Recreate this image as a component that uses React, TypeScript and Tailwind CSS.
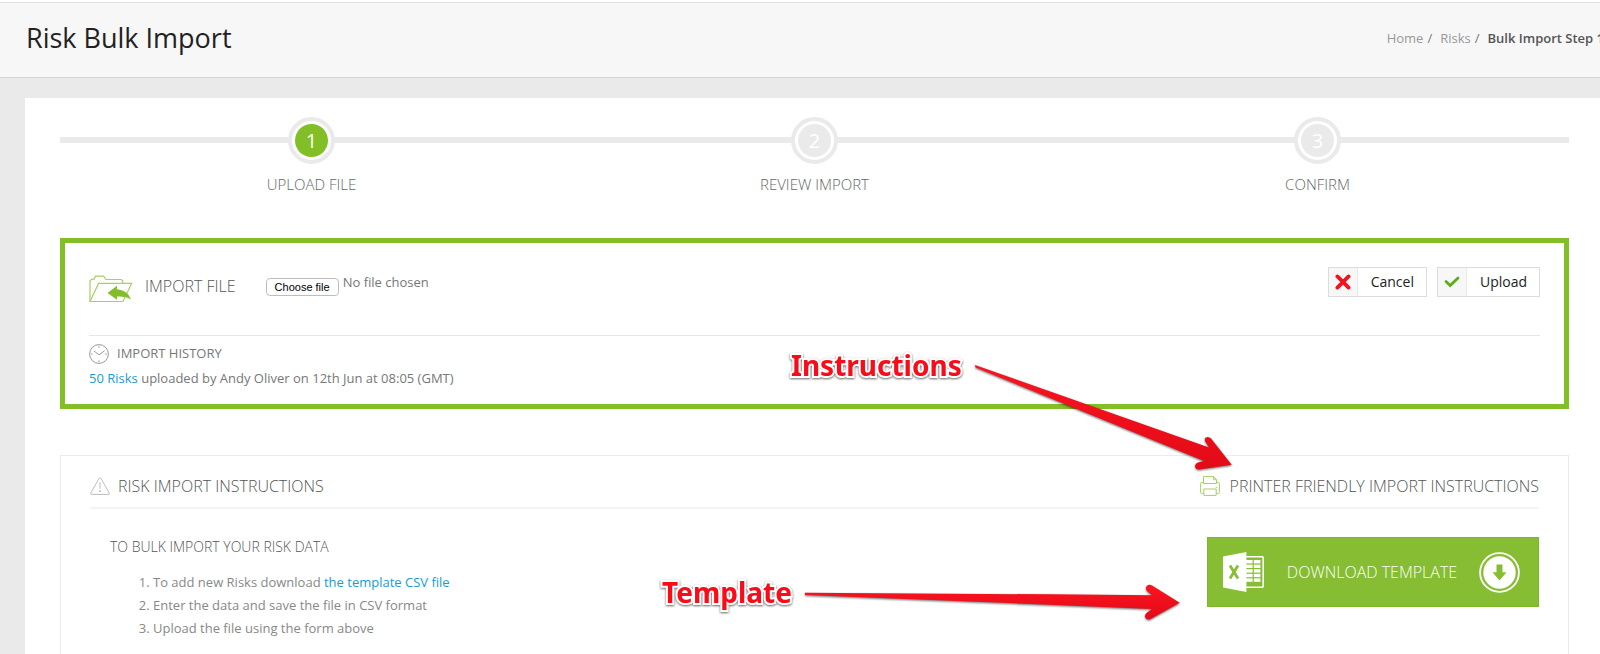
import React, { useState } from 'react';

interface Step {
  id: number;
  label: string;
  active: boolean;
}

const steps: Step[] = [
  { id: 1, label: 'UPLOAD FILE', active: true },
  { id: 2, label: 'REVIEW IMPORT', active: false },
  { id: 3, label: 'CONFIRM', active: false }
];

const FolderIcon = () => (
  <svg width="44" height="28" viewBox="0 0 44 28" fill="none" className="shrink-0">
    <path d="M1 26.5V5.5L3.2 4.2H5.2L6.4 1.2H14.6L17 4.5H32.2L33.8 5.8V8.3" stroke="#a5d160" strokeWidth="1.2" />
    <path d="M1 26.5L9.6 8.4H42.6L34 26.5Z" stroke="#a5d160" strokeWidth="1.2" />
    <path d="M18.5 18L28 10.8V14.2C35 15 39.5 18 42 24.4C38 22 33.5 21.4 28 21.6V24.8Z" fill="#82be2a" />
  </svg>
);

const ClockIcon = () => (
  <svg width="20" height="20" viewBox="0 0 20 20" fill="none" stroke="#8c8c8c" className="shrink-0">
    <circle cx="10" cy="10" r="9.4" strokeWidth="0.9" />
    <path d="M5 7L10 10.8L15.6 6.8" strokeWidth="0.9" />
    <path d="M10 2.2V3.6M10 16.4V17.8M2.2 10H3.6M16.4 10H17.8" strokeWidth="1.2" />
  </svg>
);

const WarningIcon = () => (
  <svg width="20" height="18" viewBox="0 0 20 18" fill="none" stroke="#b5b5b5" className="shrink-0">
    <path d="M9.2 1.2Q10 0 10.8 1.2L19.2 16Q19.6 17.3 18.4 17.4H1.6Q0.4 17.3 0.8 16Z" strokeWidth="0.9" />
    <path d="M10 5.2V11.8" strokeWidth="0.9" />
    <path d="M10 13.6V14.8" stroke="#8c8c8c" strokeWidth="1.4" />
  </svg>
);

const PrinterIcon = () => (
  <svg width="20" height="20" viewBox="0 0 20 20" fill="none" stroke="#a5d160" className="shrink-0">
    <path d="M3.5 7.5V0.6H13.6L16.5 3.5V7.5M13.4 0.8V3.7H16.4" />
    <path d="M3.5 6.4H1.6Q0.6 6.4 0.6 7.4V16.4Q0.6 17.4 1.6 17.4H3.5M16.5 6.4H18.4Q19.4 6.4 19.4 7.4V16.4Q19.4 17.4 18.4 17.4H16.5" />
    <path d="M3.5 7.5H16.5M3.8 13H16.2V19.4H3.8Z" />
    <path d="M15.6 11.3H17.4" />
  </svg>
);

const ExcelIcon = () => (
  <svg width="42" height="40" viewBox="0 0 42 40" className="shrink-0">
    <rect x="18" y="4.8" width="22.2" height="30.4" rx="1" fill="none" stroke="#fff" strokeWidth="1.6" />
    <g fill="#fff">
      <rect x="23" y="8" width="6.6" height="3.4" />
      <rect x="23" y="12.6" width="6.6" height="3.4" />
      <rect x="23" y="17.2" width="6.6" height="3.4" />
      <rect x="23" y="21.8" width="6.6" height="3.4" />
      <rect x="23" y="26.4" width="6.6" height="3.4" />
      <rect x="30.8" y="8" width="6.6" height="3.4" />
      <rect x="30.8" y="12.6" width="6.6" height="3.4" />
      <rect x="30.8" y="17.2" width="6.6" height="3.4" />
      <rect x="30.8" y="21.8" width="6.6" height="3.4" />
      <rect x="30.8" y="26.4" width="6.6" height="3.4" />
      <path d="M0 4.6L23.4 0V40L0 35.4Z" />
    </g>
    <path d="M7 13.6L15 26.6M15 13.6L7 26.6" stroke="#86bd32" strokeWidth="2.8" />
  </svg>
);

const DownloadIcon = () => (
  <svg width="41" height="41" viewBox="0 0 41 41" className="shrink-0">
    <circle cx="20.5" cy="20.5" r="19.4" fill="none" stroke="#fff" strokeWidth="1.8" />
    <circle cx="20.5" cy="20.5" r="16.2" fill="#fff" />
    <path d="M17.5 12.5H23.5V20.3H27.5L20.5 28.5L13.5 20.3H17.5Z" fill="#86bd32" />
  </svg>
);

const CrossIcon = () => (
  <svg width="16" height="16" viewBox="0 0 16 16" stroke="#ee1520" strokeWidth="3.8" strokeLinecap="round">
    <path d="M2.4 2.4L13.6 13.6M13.6 2.4L2.4 13.6" />
  </svg>
);

const CheckIcon = () => (
  <svg width="16" height="12" viewBox="0 0 16 12" fill="none" stroke="#5aae1a" strokeWidth="2.8" strokeLinecap="round">
    <path d="M2 5.4L6.2 9.6L14 2" />
  </svg>
);

const Annotations = () => (
  <div className="absolute inset-0 pointer-events-none overflow-hidden font-['Noto_Sans',sans-serif] text-[28px] leading-[38px] font-bold text-[#fb0a18]">
    <svg className="absolute left-0 top-0 w-full h-full">
      <defs>
        <linearGradient id="arrowFill" x1="0" y1="0" x2="0" y2="1">
          <stop offset="0" stopColor="#fb1420" />
          <stop offset="1" stopColor="#e30a17" />
        </linearGradient>
      </defs>
      <g fill="url(#arrowFill)" className="drop-shadow-[0_1px_1px_rgba(0,0,0,0.6)]">
        <path d="M975 365L1209 447.6L1205 441Q1204 437.5 1207.5 437Q1209.5 437 1211 438.5L1231.7 464.7L1199 469.6Q1195.3 469.3 1195 466Q1195.5 463.3 1198 462.6L1204 461L975.5 367.5Z" />
        <path d="M805 592.8L1050 594.3L1152 595.3L1147 591Q1144.8 588 1147 585.8Q1149.5 584 1152 585.6L1179.7 602.7L1150 619.2Q1147 620.2 1145.3 617.6Q1144.4 614.8 1146.5 613L1152 609L1050 604.7L805 595Z" />
      </g>
    </svg>
    <span className="absolute left-[791px] top-[346px] [paint-order:stroke_fill] [-webkit-text-stroke:4px_#fff] drop-shadow-[0_1px_1px_rgba(0,0,0,0.6)]">
      Instructions
    </span>
    <span className="absolute left-[662px] top-[573px] [paint-order:stroke_fill] [-webkit-text-stroke:4px_#fff] drop-shadow-[0_1px_1px_rgba(0,0,0,0.6)]">
      Template
    </span>
  </div>
);

export default function App() {
  const [fileName, setFileName] = useState('No file chosen');

  const handleFileChange = (e: React.ChangeEvent<HTMLInputElement>) => {
    setFileName(e.target.files?.[0]?.name ?? 'No file chosen');
  };

  return (
    <div className="relative min-h-screen flex flex-col overflow-hidden bg-[#eaeaea] pt-0.5 font-['Open_Sans',sans-serif] text-[13px] leading-5 text-[#777]">
      <header className="flex items-center justify-between h-[76px] border-y border-t-[#e4e4e4] border-b-[#d6d6d6] bg-[#f7f7f7] pl-[26px] pb-1 shadow-[0_-2px_0_#fff]">
        <h1 className="text-[27px] leading-9 text-[#222]">Risk Bulk Import</h1>
        <nav className="flex gap-2 -mr-1 whitespace-nowrap">
          <span className="flex gap-1"><a href="#home" className="text-[#999]">Home</a>/</span>
          <span className="flex gap-1"><a href="#risks" className="text-[#999]">Risks</a>/</span>
          <span className="font-semibold text-[#555]">Bulk Import Step 1</span>
        </nav>
      </header>

      <main className="grow flex flex-col mt-5 ml-[25px] bg-white pl-[35px] pr-[31px] pt-[19px]">
        <ol className="relative flex">
          <li aria-hidden="true" className="absolute inset-x-0 top-5 h-1.5 bg-[#eaeaea]"></li>
          {steps.map((step) => (
            <li key={step.id} className="relative flex-1 flex flex-col items-center">
              <div className="w-[47px] h-[47px] rounded-full border-4 border-[#eaeaea] bg-white p-[3px]">
                <div className={`w-full h-full rounded-full flex items-center justify-center text-[20px] text-white ${step.active ? 'bg-[#82be25]' : 'bg-[#eaeaea]'}`}>
                  {step.id}
                </div>
              </div>
              <span className="mt-2.5 text-[15px] leading-5 font-light text-[#666]">{step.label}</span>
            </li>
          ))}
        </ol>

        <section className="mt-11 border-[5px] border-[#82be25] px-6 pt-6 pb-4">
          <div className="flex items-start border-b border-[#e6e6e6] pb-8">
            <div className="flex items-center gap-3 pt-2">
              <FolderIcon />
              <h2 className="pb-1.5 text-[16px] leading-5 font-light text-[#555]">IMPORT FILE</h2>
            </div>
            <div className="flex items-start ml-[30px] gap-1 pt-[5px]">
              <input id="import-file" type="file" className="sr-only" onChange={handleFileChange} />
              <label htmlFor="import-file" className="mt-1.5 flex items-center h-[18px] px-2 rounded-[4px] border border-[#bdbdbd] bg-white font-['Liberation_Sans',sans-serif] text-[11px] text-black">
                Choose file
              </label>
              <span>{fileName}</span>
            </div>
            <div className="flex gap-2.5 ml-auto">
              <button className="flex items-stretch h-[30px] border border-[#dcdcdc] bg-white text-[14px] text-[#222]">
                <span className="flex items-center justify-center w-[29px] bg-[#f7f7f7] border-r border-[#e8e8e8]"><CrossIcon /></span>
                <span className="flex items-center pl-[13px] pr-3">Cancel</span>
              </button>
              <button className="flex items-stretch h-[30px] border border-[#dcdcdc] bg-white text-[14px] text-[#222]">
                <span className="flex items-center justify-center w-[29px] bg-[#f7f7f7] border-r border-[#e8e8e8]"><CheckIcon /></span>
                <span className="flex items-center pl-[13px] pr-3">Upload</span>
              </button>
            </div>
          </div>
          <div className="flex items-start gap-2 pt-2">
            <ClockIcon />
            <h3 className="leading-[18px]">IMPORT HISTORY</h3>
          </div>
          <p className="mt-1">
            <a href="#risks" className="text-[#1a9ad6]">50 Risks</a> uploaded by Andy Oliver on 12th Jun at 08:05 (GMT)
          </p>
        </section>

        <section className="grow mt-[46px] border border-b-0 border-[#ebebeb] px-[29px] pt-[18px]">
          <div className="flex justify-between border-b-2 border-[#f4f4f4] pb-[9px] text-[16px] leading-6 font-light text-[#555]">
            <h2 className="flex items-center gap-2">
              <WarningIcon />
              RISK IMPORT INSTRUCTIONS
            </h2>
            <a href="#print" className="flex items-center gap-2.5">
              <PrinterIcon />
              PRINTER FRIENDLY IMPORT INSTRUCTIONS
            </a>
          </div>
          <div className="flex items-start justify-between pt-7">
            <div className="pl-5">
              <h3 className="text-[14px] leading-5 font-light text-[#555]">TO BULK IMPORT YOUR RISK DATA</h3>
              <ol className="mt-3.5 pl-[43px] list-decimal leading-[23px] text-[#888]">
                <li>To add new Risks download <a href="#template" className="text-[#1a9ad6]">the template CSV file</a></li>
                <li>Enter the data and save the file in CSV format</li>
                <li>Upload the file using the form above</li>
              </ol>
            </div>
            <a href="#template" className="flex items-center justify-between w-[332px] h-[70px] border border-[#7db728] bg-[#86bd32] pl-[15px] pr-[18px] text-[16px] font-light text-white">
              <ExcelIcon />
              <span>DOWNLOAD TEMPLATE</span>
              <DownloadIcon />
            </a>
          </div>
        </section>
      </main>

      <Annotations />
    </div>
  );
}
